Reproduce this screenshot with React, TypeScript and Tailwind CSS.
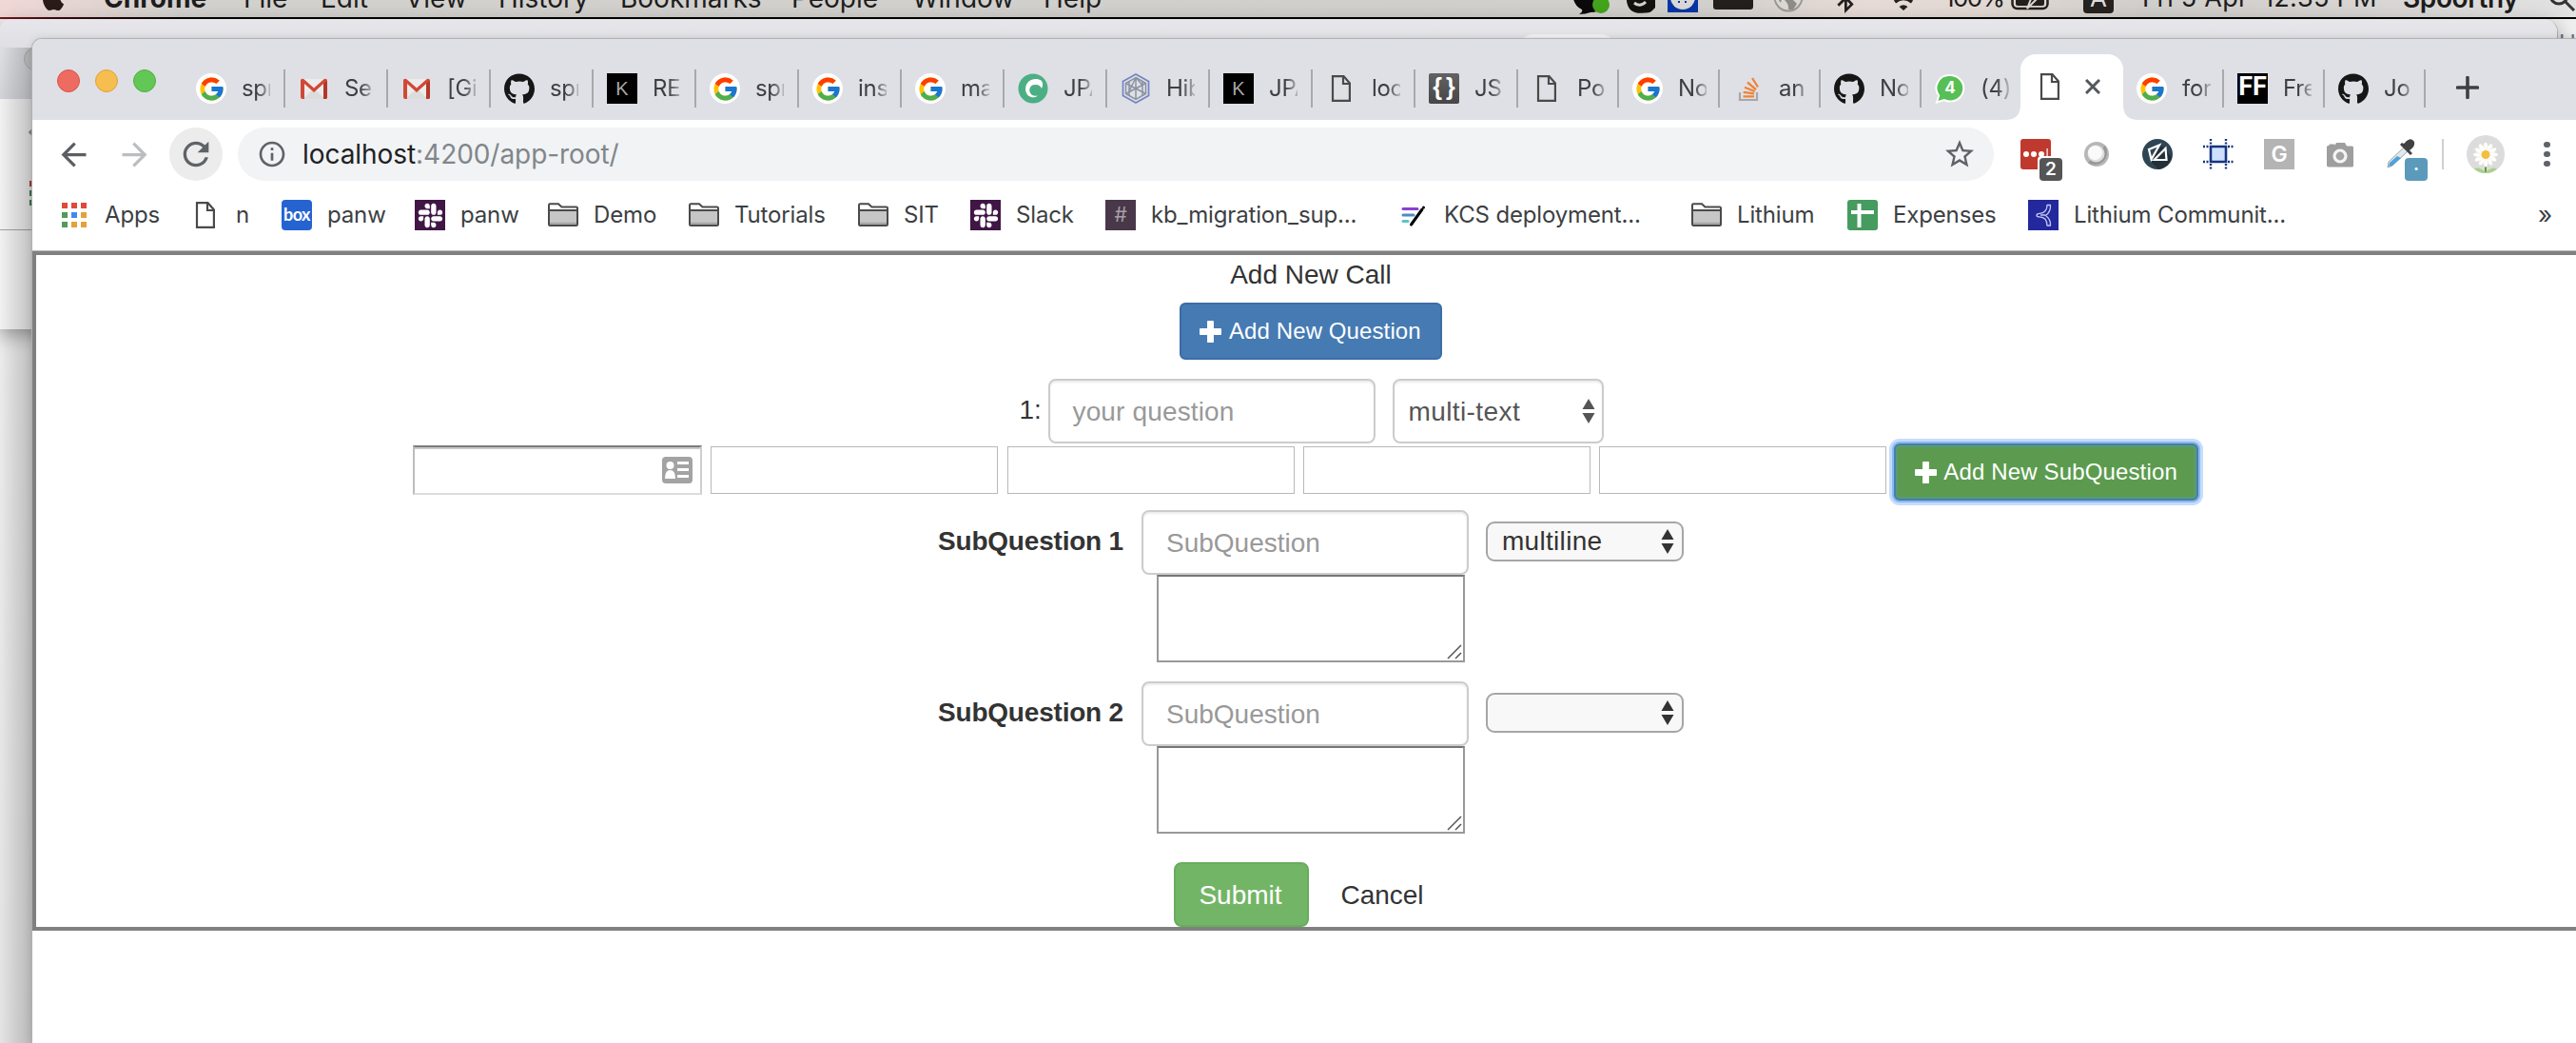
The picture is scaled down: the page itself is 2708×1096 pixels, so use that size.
import React from "react";
import { FcGoogle } from "react-icons/fc";
import { FaApple, FaGithub, FaSlack, FaBluetoothB } from "react-icons/fa6";
import { MdArrowBack, MdArrowForward, MdRefresh, MdInfoOutline, MdStarBorder } from "react-icons/md";

/* ---------- icons ---------- */

const GoogleIcon = () => (
  <span className="flex size-8 items-center justify-center rounded-full bg-white">
    <FcGoogle className="size-[29px]" />
  </span>
);

const GmailIcon = () => (
  <svg viewBox="0 0 32 32" className="size-8">
    <path d="M4 6h24v21H4z" fill="#ececec" />
    <path d="M4 27l12-11 12 11z" fill="#dcdcdc" />
    <path d="M2 8v17a2 2 0 0 0 2 2h2V11l10 9 10-9v16h2a2 2 0 0 0 2-2V8c0-2-2-3-3.500-1.700L16 15.500 5.500 6.300C4 5 2 6 2 8z" fill="#d14836" />
    <path d="M26 11v16h2a2 2 0 0 0 2-2V8z" fill="#b5372a" />
  </svg>
);

const GithubIcon = () => <FaGithub className="size-[33px] text-[#161616]" />;

const KIcon = () => (
  <span className="flex size-8 items-center justify-center bg-black font-['Liberation_Sans',sans-serif] text-[20px] text-[#a5a5a5]">K</span>
);

const PageIcon = () => (
  <svg viewBox="0 0 32 32" className="size-8" fill="none" stroke="#4a4a4a" strokeWidth="2.200">
    <path d="M7 3.100h11.500l6.400 7.400v18.400H7z" />
    <path d="M18 3v8h7" />
  </svg>
);

const LeafIcon = () => (
  <svg viewBox="0 0 32 32" className="size-8">
    <circle cx="16" cy="16" r="15.500" fill="#4caf84" />
    <path d="M25 8c-4-3-10-2.500-13.500.500C7 12.500 7 20 11 23.500c3 2.500 8 2.200 10 0-4 1-7.500-.500-8.500-4C11.500 15.500 14 12 18 12c3 0 5.500.500 7 4 1.500-3 1.500-5.500 0-8z" fill="#fff" />
  </svg>
);

const HibernateIcon = () => (
  <svg viewBox="0 0 32 32" className="size-8" fill="none">
    <path d="M16 1l13.500 7.500v15L16 31 2.500 23.500v-15z" stroke="#7484c4" strokeWidth="1.700" />
    <g stroke="#8a92a3" strokeWidth="1.500">
      <path d="M16 4.500l10.500 6v11L16 27.500l-10.500-6v-11z" />
      <path d="M16 4.500v23M5.500 10.500l21 11M26.500 10.500l-21 11M5.500 10.500L16 16M9 9v14M23 9v14M16 4.500l-7 14.500M16 4.500l7 8" />
    </g>
  </svg>
);

const JsonIcon = () => (
  <span className="flex size-8 items-center justify-center rounded-[2px] bg-gradient-to-b from-[#636363] to-[#464646] pb-[3px] font-['Liberation_Sans',sans-serif] text-[25px] font-bold tracking-[4px] text-white">
    <span className="-mr-1">{"{}"}</span>
  </span>
);

const StackIcon = () => (
  <svg viewBox="0 0 32 32" className="size-8" fill="none">
    <path d="M7 20v8h18v-8" stroke="#a5a7aa" strokeWidth="2.200" />
    <path d="M10.500 24.300h11.500M10.700 19.800l11.300 1.600M12 14.800l10.700 4.200M15 9.500l9 7.600M20 5l6 9.500" stroke="#ef8236" strokeWidth="2.300" />
  </svg>
);

const WhatsIcon = () => (
  <span className="relative flex size-8 items-center justify-center">
    <svg viewBox="0 0 32 32" className="absolute inset-0 size-8">
      <path d="M16 2a14 13.500 0 0 1 0 27.500c-2.500 0-4.500-.500-6.500-1.500L2 30.500l2.200-7A13.500 13.500 0 0 1 16 2z" fill="#56bf55" stroke="#fff" strokeWidth="2" />
    </svg>
    <span className="relative font-['Inter',sans-serif] text-[17px] font-bold text-white">4</span>
  </span>
);

const FfIcon = () => (
  <span className="flex size-8 items-center justify-center overflow-hidden bg-black pb-1 font-['Roboto',sans-serif] text-[27px] font-bold leading-none text-white">FF</span>
);

const AppsIcon = () => (
  <span className="flex size-8 items-center justify-center">
    <span className="grid grid-cols-3 gap-1">
      {["bg-[#e0493b]", "bg-[#e0493b]", "bg-[#e0493b]", "bg-[#529b5b]", "bg-[#4487f2]", "bg-[#e3a23a]", "bg-[#529b5b]", "bg-[#e3a23a]", "bg-[#e3a23a]"].map((c, i) => (
        <i key={i} className={`size-1.5 ${c}`} />
      ))}
    </span>
  </span>
);

const BoxIcon = () => (
  <span className="flex size-8 items-center justify-center rounded-[4px] bg-[#2563d0] pb-px font-['Lato',sans-serif] text-[18px] font-bold tracking-[-0.5px] text-white">box</span>
);

const SlackIcon = () => (
  <span className="flex size-8 items-center justify-center bg-[#401645]">
    <FaSlack className="size-[29px] text-white" />
  </span>
);

const FolderIcon = () => (
  <svg viewBox="0 0 32 32" className="size-8" strokeWidth="2" stroke="#4a4a4a">
    <path d="M1 10.500V5.500Q1 4.300 2.200 4.300H11l3.500 3.200h15.300q1.200 0 1.200 1.200v2" fill="#fff" />
    <path d="M1 11h30v14.800q0 1.200-1.200 1.200H2.200Q1 27 1 25.800z" fill="#c6c6c6" />
    <path d="M2 24.800h28" stroke="#a3a3a3" />
  </svg>
);

const HashIcon = () => (
  <span className="flex size-8 items-center justify-center bg-[#493849] font-['Inter',sans-serif] text-[21px] text-[#a79ea8]">#</span>
);

const NoteIcon = () => (
  <svg viewBox="0 0 32 32" className="size-8" fill="none" strokeLinecap="round">
    <path d="M5 9.500h15" stroke="#8a3fd0" strokeWidth="3" />
    <path d="M5 16h11" stroke="#4b8ec2" strokeWidth="3" />
    <path d="M5 22.500h5" stroke="#5cc4c4" strokeWidth="3" />
    <path d="M13.500 26L25 10" stroke="#000" strokeWidth="3" />
    <circle cx="26.500" cy="8" r="1.500" fill="#000" />
  </svg>
);

const SheetIcon = () => (
  <span className="flex size-8 items-center justify-center rounded-[3px] bg-[#469b5f]">
    <svg viewBox="0 0 32 32" className="size-8" stroke="#fff" fill="none">
      <path d="M12.500 4v25" strokeWidth="4" />
      <path d="M4 13h24" strokeWidth="4" />
    </svg>
  </span>
);

const LithiumIcon = () => (
  <span className="flex size-8 items-center justify-center bg-[#23289c]">
    <svg viewBox="0 0 32 32" className="size-8" stroke="#c3c7f0" strokeWidth="1.300" fill="none" strokeLinejoin="round">
      <path d="M20 5.500h3.500c.300 5-1.500 8.500-5 11 3.500 2.500 5.300 6 5 10.500H20c0-5-2.500-9-8-9.200-4 0-4-3.200 0-3.500 5.500-.300 8-3.800 8-8.800z" />
      <path d="M13 16h5.500" />
    </svg>
  </span>
);

const Plus = () => (
  <svg viewBox="0 0 22 22" className="size-[23px]" fill="currentColor">
    <path d="M8.500 0h5q.800 0 .800.800V7.700H21.200q.800 0 .800.800v5q0 .800-.800.800H14.300v6.900q0 .800-.800.800h-5q-.800 0-.800-.800V14.300H.800Q0 14.300 0 13.500v-5q0-.800.800-.800H7.700V.800Q7.700 0 8.500 0z" />
  </svg>
);

const Stepper = () => (
  <svg viewBox="0 0 14 26" className="h-[26px] w-[14px]" fill="currentColor">
    <path d="M7 0l6.500 11H.500z" />
    <path d="M7 26L.500 15h13z" />
  </svg>
);

/* ---------- data ---------- */

type Tab = { icon: React.ReactNode; title: string };
const wideTabs: Tab[] = [
  { icon: <GoogleIcon />, title: "spr" },
  { icon: <GmailIcon />, title: "Se" },
  { icon: <GmailIcon />, title: "[Gi" },
  { icon: <GithubIcon />, title: "spr" },
  { icon: <KIcon />, title: "RE" },
  { icon: <GoogleIcon />, title: "spr" },
  { icon: <GoogleIcon />, title: "ins" },
  { icon: <GoogleIcon />, title: "ma" },
  { icon: <LeafIcon />, title: "JPA" },
  { icon: <HibernateIcon />, title: "Hib" },
  { icon: <KIcon />, title: "JPA" },
  { icon: <PageIcon />, title: "loc" },
  { icon: <JsonIcon />, title: "JSO" },
];
const narrowTabs: Tab[] = [
  { icon: <PageIcon />, title: "Po" },
  { icon: <GoogleIcon />, title: "No" },
  { icon: <StackIcon />, title: "an" },
  { icon: <GithubIcon />, title: "No" },
  { icon: <WhatsIcon />, title: "(4)" },
];
const lastTabs: Tab[] = [
  { icon: <GoogleIcon />, title: "for" },
  { icon: <FfIcon />, title: "Fre" },
  { icon: <GithubIcon />, title: "Jo" },
];

const TabItem = ({ tab, wide, divider = true }: { tab: Tab; wide?: boolean; divider?: boolean }) => (
  <div className={`flex h-10 shrink-0 items-center border-r-2 pl-[14px] ${wide ? "w-[108px]" : "w-[106px]"} ${divider ? "border-[#a8a9ac]" : "border-transparent"}`}>
    <span className="flex size-8 shrink-0 items-center justify-center">{tab.icon}</span>
    <span className="ml-[16px] w-[30px] overflow-hidden whitespace-nowrap text-[24px] leading-8 tracking-[-0.3px] text-[#3c4043] [mask-image:linear-gradient(to_right,#000_55%,rgba(0,0,0,0.25)_100%)]">
      {tab.title}
    </span>
  </div>
);

const bookmarks: { icon: React.ReactNode; label: string; w: string }[] = [
  { icon: <AppsIcon />, label: "Apps", w: "w-[138px]" },
  { icon: <PageIcon />, label: "n", w: "w-[96px]" },
  { icon: <BoxIcon />, label: "panw", w: "w-[140px]" },
  { icon: <SlackIcon />, label: "panw", w: "w-[140px]" },
  { icon: <FolderIcon />, label: "Demo", w: "w-[148px]" },
  { icon: <FolderIcon />, label: "Tutorials", w: "w-[178px]" },
  { icon: <FolderIcon />, label: "SIT", w: "w-[118px]" },
  { icon: <SlackIcon />, label: "Slack", w: "w-[142px]" },
  { icon: <HashIcon />, label: "kb_migration_sup...", w: "w-[308px]" },
  { icon: <NoteIcon />, label: "KCS deployment...", w: "w-[308px]" },
  { icon: <FolderIcon />, label: "Lithium", w: "w-[164px]" },
  { icon: <SheetIcon />, label: "Expenses", w: "w-[190px]" },
  { icon: <LithiumIcon />, label: "Lithium Communit...", w: "w-[536px]" },
];

/* ---------- sections ---------- */

const menus: [string, string][] = [
  ["File", "w-[81px]"],
  ["Edit", "w-[89px]"],
  ["View", "w-[98px]"],
  ["History", "w-[128px]"],
  ["Bookmarks", "w-[180px]"],
  ["People", "w-[127px]"],
  ["Window", "w-[138px]"],
  ["Help", "w-[70px]"],
];

const MenuBar = () => (
  <div className="flex h-[18px] items-end overflow-hidden bg-[linear-gradient(90deg,#f0d8d6_0,#e6d6d3_70px,#d3d1ce_190px,#d0cfcb_1500px,#d2d0cd_1800px,#e6dbd5_1960px,#e2d9d4_2080px,#d0cecb_2260px,#d6d3d1_2450px,#e2e2e2_2708px)] text-[28px] leading-[34px] text-[#1d1d1d]">
    <div className="flex h-[34px] w-full -translate-y-[3px] items-center whitespace-nowrap">
      <FaApple className="ml-[41px] size-[30px] shrink-0 text-[#2b1a1a]" />
      <span className="ml-[38px] w-[147px] font-bold">Chrome</span>
      {menus.map(([m, w]) => (
        <span key={m} className={`shrink-0 ${w}`}>{m}</span>
      ))}
      <div className="ml-[485px] flex h-full shrink-0 translate-y-[2px] items-end">
        <svg viewBox="0 0 40 34" className="h-[34px] w-[40px]">
          <path d="M2 16h32v9q-6 5-14 5-5 2-12 2 4-2 3-5-7-3-9-11z" fill="#0a0a0a" />
          <circle cx="31" cy="22" r="9" fill="#43a31c" />
        </svg>
        <svg viewBox="0 0 32 34" className="ml-[16px] h-[34px] w-[32px]">
          <path d="M2 8h24a14 12 0 0 1 4 19q-3 4-9 3.500Q4 33 2 18z" fill="#14120f" />
          <path d="M10 20q6 5 12-1" stroke="#d4d2cf" strokeWidth="3" fill="none" />
        </svg>
        <svg viewBox="0 0 32 34" className="ml-[13px] h-[34px] w-[32px]">
          <path d="M0 0h32v30H0z" fill="#0536a5" />
          <circle cx="16" cy="14" r="13" fill="#d9d8d7" />
          <path d="M11 19h2M18 19h2" stroke="#0536a5" strokeWidth="2" />
        </svg>
        <i className="mb-[7px] ml-[16px] h-6 w-[42px] rounded-[3px] bg-[#231f1d]" />
        <svg viewBox="0 0 32 34" className="ml-[21px] h-[34px] w-[32px]">
          <circle cx="16" cy="14" r="14.500" fill="#dad8d5" stroke="#9b9792" strokeWidth="2" />
          <path d="M12 17l8-1 5 5-4 6h-5q1-5-4-10zM2 12h8l-2 8z" fill="#8f8b86" />
        </svg>
        <FaBluetoothB className="mb-[3px] ml-[31px] h-[33px] w-[26px] text-[#231f1d]" />
        <svg viewBox="0 0 34 34" className="ml-[31px] h-[34px] w-[34px]" fill="none" stroke="#231f1d" strokeWidth="3.500">
          <path d="M8 19q9-7 18 0" />
          <path d="M12.500 24q4.500-3.500 9 0L17 28z" fill="#231f1d" stroke="none" />
        </svg>
      </div>
      <span className="ml-[26px] w-[70px] shrink-0 text-[26px] tracking-[-1.6px]">100%</span>
      <svg viewBox="0 0 44 28" className="h-[28px] w-[44px] shrink-0" fill="none">
        <rect x="1.500" y="2" width="37" height="23" rx="5" stroke="#231f1d" strokeWidth="2.500" />
        <rect x="5" y="6" width="30" height="16" rx="2" fill="#231f1d" />
        <path d="M25 4l-11 11h7l-4 10 11-11h-7z" fill="#231f1d" stroke="#dcd6d2" strokeWidth="2" />
        <path d="M41 11q3 2.500 0 5" fill="#231f1d" />
      </svg>
      <span className="ml-[32px] flex size-8 shrink-0 items-center justify-center rounded-[4px] bg-[#262220] text-[26px] leading-8 text-[#dedcda]">A</span>
      <span className="ml-[30px] w-[274px] shrink-0 whitespace-pre text-[27px] tracking-[0.25px]">Fri 5 Apr  12:35 PM</span>
      <span className="w-[152px] shrink-0 text-[28px] font-semibold tracking-[-0.4px]">Spoorthy</span>
      <svg viewBox="0 0 30 30" className="size-[30px] shrink-0" fill="none" stroke="#333" strokeWidth="3">
        <circle cx="12" cy="12" r="9" />
        <path d="M18.500 18.500L28 28" />
      </svg>
    </div>
  </div>
);

/** Parts of the windows lying behind the browser window. */
const BackWindows = () => (
  <>
    <div className="absolute inset-0 bg-gradient-to-b from-[#efefef] to-[#e4e4e4]" />
    <div className="absolute right-0 top-[14px] h-[7px] w-[18px] overflow-hidden whitespace-nowrap text-[24px] leading-6 text-[#6b7280]">UI</div>
    <div className="absolute -left-px top-0 flex h-[326px] w-[2690px] flex-col overflow-hidden rounded-tl-[14px] rounded-tr-[14px] border-r border-[#a9a9ad] bg-[#f1f1f1] shadow-[0_6px_20px_rgba(0,0,0,0.35)]">
      <div className="relative h-[84px] bg-gradient-to-b from-[#e6e6eb] to-[#d2d3d8]">
        <i className="absolute left-[26px] top-[30px] size-6 rounded-full border border-[#b5b6ba] bg-[#d0d1d2]" />
        <i className="absolute left-[1600px] top-4 h-10 w-[97px] rounded-t-xl bg-[#f1f1f1]" />
      </div>
      <div className="h-[138px] border-b border-[#a3a3a3]" />
      <div className="absolute left-[32px] top-[170px] flex flex-col gap-1">
        <i className="size-1.5 bg-[#b03b32]" />
        <i className="size-1.5 bg-[#3f7c48]" />
        <i className="size-1.5 bg-[#3f7c48]" />
      </div>
      <i className="absolute left-[32px] top-[116px] size-[6px] rotate-45 bg-[#8e8e8e]" />
    </div>
    <div className="absolute bottom-0 left-0 top-[30px] w-[34px] bg-gradient-to-r from-transparent to-black/20" />
  </>
);

const TabStrip = () => (
  <div className="flex h-[85px] bg-[#dfe0e5] pt-4">
    <div className="ml-[26px] flex gap-4 pt-4">
      <i className="size-6 rounded-full border border-[#d9534a] bg-[#ed6b60]" />
      <i className="size-6 rounded-full border border-[#dca43f] bg-[#f5be4f]" />
      <i className="size-6 rounded-full border border-[#51b040] bg-[#62c755]" />
    </div>
    <div className="ml-7 flex pt-4">
      {wideTabs.map((t, i) => <TabItem key={i} tab={t} wide />)}
      {narrowTabs.map((t, i) => <TabItem key={i} tab={t} divider={i !== narrowTabs.length - 1} />)}
    </div>
    <div className="relative -ml-[2px] flex h-[69px] w-[108px] items-start rounded-t-[16px] bg-white pl-[15px] pt-[18px]">
      <svg viewBox="0 0 16 16" className="absolute -left-4 bottom-0 size-4"><path d="M16 0v16H0Q16 16 16 0z" fill="#fff" /></svg>
      <svg viewBox="0 0 16 16" className="absolute -right-4 bottom-0 size-4"><path d="M0 0v16h16Q0 16 0 0z" fill="#fff" /></svg>
      <PageIcon />
      <svg viewBox="0 0 16 16" className="ml-[21px] mt-2 size-4" stroke="#54585c" strokeWidth="3"><path d="M1 1l14 14M15 1L1 15" /></svg>
    </div>
    <div className="flex pt-4">
      {lastTabs.map((t, i) => <TabItem key={i} tab={t} />)}
    </div>
    <svg viewBox="0 0 24 24" className="ml-8 mt-[23px] size-6" stroke="#3c4043" strokeWidth="3.600" strokeLinecap="round"><path d="M12 1.500v21M1.500 12h21" /></svg>
  </div>
);

const Badge = ({ children, className }: { children: React.ReactNode; className: string }) => (
  <span className={`absolute left-5 top-5 flex size-6 items-center justify-center rounded-[4px] text-[19px] font-semibold leading-6 text-white ${className}`}>{children}</span>
);

const Extensions = () => (
  <div className="ml-7 flex items-center gap-8">
    <span className="relative size-8 rounded-[3px] bg-[#c0392e]">
      <svg viewBox="0 0 32 32" className="size-8" fill="#fff"><circle cx="6" cy="16" r="3" /><circle cx="14" cy="16" r="3" /><circle cx="22" cy="16" r="3" /><path d="M27.500 10h1.200v12h-1.200z" /></svg>
      <Badge className="bg-[#555] shadow-[-2px_-2px_0_#fff]">2</Badge>
    </span>
    <svg viewBox="0 0 32 32" className="size-8">
      <circle cx="16" cy="16" r="13" fill="#b6b6b6" />
      <path d="M25 7a13 13 0 0 1-18 18z" fill="#989898" />
      <circle cx="15.500" cy="15.500" r="9" fill="#dedede" />
      <circle cx="14.500" cy="14.500" r="7.500" fill="#fafafa" />
    </svg>
    <svg viewBox="0 0 32 32" className="size-8">
      <circle cx="16" cy="16" r="16" fill="#304553" />
      <path d="M20 7l11 12a16 16 0 0 1-14 13l-9-9z" fill="#233039" />
      <path d="M7 11l11-4.500-8.500 15zM12.500 22L24.500 10l1 12z" fill="none" stroke="#fff" strokeWidth="2.200" />
    </svg>
    <svg viewBox="0 0 32 32" className="size-8" stroke="#16357f" fill="none">
      <path d="M8 8h16v16H8z" fill="#cfe0ff" strokeWidth="2.600" />
      <path d="M8 0v6M24 0v6M8 26v6M24 26v6M0 8h6M26 8h6M0 24h6M26 24h6" strokeWidth="2.400" strokeDasharray="2 1.500" />
    </svg>
    <span className="flex size-8 items-center justify-center bg-[#b4b4b4] text-[23px] font-semibold text-white">G</span>
    <svg viewBox="0 0 32 32" className="size-8">
      <path d="M3 7h1.500V5.500h6V7L12 4h9l2 3.500h5.500q1.500 0 1.500 1.500v19q0 1.500-1.500 1.500h-24Q2 29.500 2 28V8z" fill="#9e9e9e" />
      <circle cx="16" cy="18" r="6" fill="#a5a5a5" stroke="#f5f5f5" strokeWidth="3.200" />
    </svg>
    <span className="relative size-8">
      <svg viewBox="0 0 32 32" className="size-8">
        <path d="M19 9l4 4L7 28l-5 2 1-6z" fill="#dfe9ee" stroke="#9aa5ab" />
        <path d="M12 18l4 2-9 8-4 1 1-4z" fill="#4ea3d8" />
        <path d="M15 6l11 11 2-2-3-3q6-4 5-9-3-5-8-1l-3 3-2-1z" fill="#414141" />
      </svg>
      <Badge className="bg-[#5b9aba] shadow-[-2px_-2px_0_#fff]">·</Badge>
    </span>
  </div>
);

const Daisy = () => (
  <svg viewBox="0 0 40 40" className="ml-6 size-10">
    <circle cx="20" cy="20" r="20" fill="#dcdcdc" />
    <path d="M20 24v16" stroke="#5f9a3c" strokeWidth="2" />
    <path d="M20 39q-6-6-12-4 4 5 12 5 8 0 12-5-6-2-12 4z" fill="#a9d18a" />
    {[0, 30, 60, 90, 120, 150, 180, 210, 240, 270, 300, 330].map((a) => (
      <ellipse key={a} cx="20" cy="13.500" rx="2.500" ry="6" fill="#fff" stroke="#e4dfd2" strokeWidth=".4" transform={`rotate(${a} 20 20.500)`} />
    ))}
    <circle cx="20" cy="20.500" r="4.500" fill="#f3bf3e" />
  </svg>
);

const Toolbar = () => (
  <div className="flex h-[72px] items-center pl-[24px]">
    <MdArrowBack className="size-[39px] text-[#5b5f64]" />
    <MdArrowForward className="ml-[25px] size-[39px] text-[#bcbdbf]" />
    <span className="ml-[17px] flex size-14 items-center justify-center rounded-full bg-[#ececed]">
      <MdRefresh className="size-[40px] text-[#5f6368]" />
    </span>
    <div className="ml-4 flex h-14 w-[1846px] items-center rounded-full bg-[#f1f3f4] pl-5">
      <MdInfoOutline className="size-8 text-[#5f6368]" />
      <span className="ml-[16px] text-[28px] tracking-[-0.06px] text-[#80868b]"><span className="text-[#202124]">localhost</span>:4200/app-root/</span>
      <MdStarBorder className="ml-auto mr-[18px] size-9 text-[#5f6368]" />
    </div>
    <Extensions />
    <i className="ml-[27px] h-8 w-[2px] bg-[#cfd0d2]" />
    <Daisy />
    <div className="ml-[41px] flex flex-col gap-[3.500px]">
      <i className="size-[6.500px] rounded-full bg-[#5f6368]" />
      <i className="size-[6.500px] rounded-full bg-[#5f6368]" />
      <i className="size-[6.500px] rounded-full bg-[#5f6368]" />
    </div>
  </div>
);

const Bookmarks = () => (
  <div className="flex h-[65px] items-center pl-7 pb-[9px] text-[24px] tracking-[-0.15px] text-[#3c4043]">
    {bookmarks.map((b, i) => (
      <div key={i} className={`flex shrink-0 items-center gap-[16px] whitespace-nowrap ${b.w}`}>
        {b.icon}
        <span>{b.label}</span>
      </div>
    ))}
    <span className="text-[26px] leading-none">»</span>
  </div>
);

/* ---------- form ---------- */

const field = "flex h-[68px] w-[344px] shrink-0 items-center rounded-[8px] border-2 border-[#ccc] bg-white pl-6 pt-[2px] text-[28px] text-[#999] shadow-[inset_0_2px_2px_rgba(0,0,0,0.075)]";

const SubQuestion = ({ n, value }: { n: number; value?: string }) => (
  <div className="flex flex-col items-center">
    <div className="flex items-center">
      <span className="w-[214px] pb-[2px] font-bold tracking-[-0.2px]">SubQuestion {n}</span>
      <div className={field}>SubQuestion</div>
      <div className="mb-[2px] ml-[18px] flex h-[42px] w-[208px] items-center justify-between rounded-[9px] border-2 border-[#a6a6a6] bg-[#f8f8f8] pl-[15px] pr-2 text-[#333]">
        <span className="tracking-[0.3px]">{value}</span>
        <Stepper />
      </div>
    </div>
    <div className="relative h-[92px] w-[324px] border-2 border-[#999] border-t-[#767676] bg-white">
      <svg viewBox="0 0 16 16" className="absolute bottom-px right-px size-4" stroke="#555" strokeWidth="1.500"><path d="M1 15L15 1M9 15l6-6" /></svg>
    </div>
  </div>
);

const CallForm = () => (
  <div className="flex w-[2684px] flex-col border-y-4 border-l-4 border-[#808080] bg-white font-['Liberation_Sans',Arial,sans-serif] text-[28px] leading-10 text-[#333]">
    <p className="pt-px text-center">Add New Call</p>
    <button className="mt-[9px] flex h-[60px] w-[276px] items-center gap-[8px] self-center rounded-[6px] border-2 border-[#3c6da5] bg-[#467ab3] pl-[19px] text-[24px] whitespace-nowrap text-white">
      <Plus />
      <span className="tracking-[0.1px]">Add New Question</span>
    </button>
    <div className="mt-5 flex items-center justify-center">
      <span className="w-[31px] pb-[2px] pl-px">1:</span>
      <div className={`${field} tracking-[0.15px]`}>your question</div>
      <div className="ml-[18px] flex h-[68px] w-[222px] items-center justify-between rounded-[8px] border-2 border-[#ccc] pl-[15px] pr-[7px] text-[#555] shadow-[inset_0_2px_2px_rgba(0,0,0,0.075)]">
        <span className="pt-[2px] tracking-[0.4px]">multi-text</span>
        <Stepper />
      </div>
    </div>
    <div className="ml-[396px] flex h-[60px] items-start gap-[9.250px]">
      <div className="mt-0.5 flex h-[52px] w-[304px] shrink-0 items-center justify-end border-2 border-[#dcdcdc] border-l-[#bdbdbd] border-r-[#cfcfcf] border-t-[#7b7b7b] pr-2 shadow-[inset_0_2px_0_#c9c9c9]">
        <svg viewBox="0 0 32 28" className="h-7 w-8">
          <rect width="32" height="28" rx="4" fill="#a3a3a3" />
          <circle cx="8.500" cy="9" r="4" fill="#fff" />
          <path d="M3 23q0-9 5.500-9t5.500 9zM16 5h12v3H16zM16 12h12v3H16zM16 19h12v3H16z" fill="#fff" />
        </svg>
      </div>
      {[0, 1, 2, 3].map((i) => (
        <div key={i} className="mt-[3px] h-[50px] w-[302px] shrink-0 border border-[#b9b9b9]" />
      ))}
      <button className="-ml-px flex h-[60px] w-[320px] shrink-0 items-center gap-[7px] rounded-[6px] border-2 border-[#4680a5] bg-[#5c9b4f] pl-5 text-[24px] whitespace-nowrap text-white shadow-[0_0_0_2px_#8ab8f5,0_0_0_5px_#c6dcfb,inset_0_0_2px_2px_#5a9a7c]">
        <Plus />
        <span className="tracking-[0.15px]">Add New SubQuestion</span>
      </button>
    </div>
    <div className="mt-[10px] flex flex-col gap-5">
      <SubQuestion n={1} value="multiline" />
      <SubQuestion n={2} />
    </div>
    <div className="mt-[30px] flex justify-center gap-2">
      <button className="h-[68px] w-[142px] rounded-[8px] border-2 border-[#67ad5b] bg-[#73b566] pt-px pr-[2px] text-white">Submit</button>
      <button className="h-[68px] w-[138px] pt-px">Cancel</button>
    </div>
  </div>
);

export default function App() {
  return (
    <div className="h-[1096px] w-[2708px] overflow-hidden bg-white font-['Inter',sans-serif]">
      <MenuBar />
      <div className="h-[2px] bg-[linear-gradient(90deg,#7a1820_0,#3a0c10_60px,#000_200px)]" />
      <div className="relative h-[1076px]">
        <BackWindows />
        <div className="relative ml-[34px] h-full w-[2740px] pt-[21px]">
          <div className="h-full overflow-hidden rounded-tl-[10px] bg-white shadow-[0_0_1px_1px_#aeb0b3,0_0_10px_rgba(0,0,0,0.12)]">
            <TabStrip />
            <Toolbar />
            <Bookmarks />
            <div className="h-px bg-[#b9b9b9]" />
            <CallForm />
          </div>
        </div>
      </div>
    </div>
  );
}
